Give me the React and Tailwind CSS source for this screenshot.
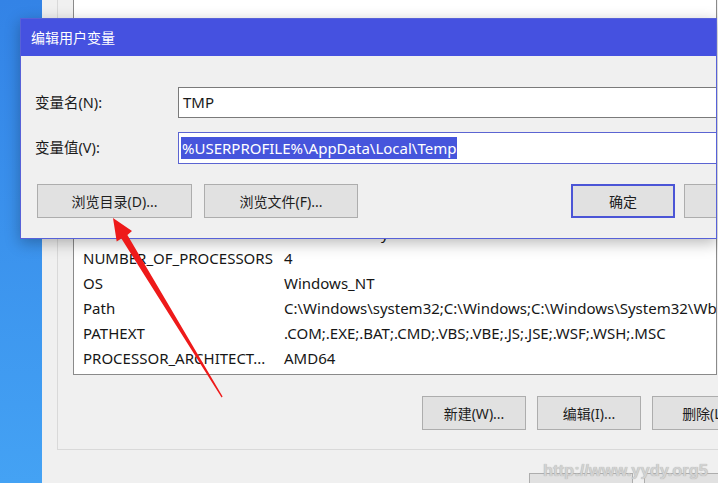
import React from 'react'

const font = "font-['Noto_Sans','Noto_Sans_CJK_SC',sans-serif]"

const rows = [
  ['DriverData', 'C:\\Windows\\System32\\Drivers\\DriverData'],
  ['NUMBER_OF_PROCESSORS', '4'],
  ['OS', 'Windows_NT'],
  ['Path', 'C:\\Windows\\system32;C:\\Windows;C:\\Windows\\System32\\Wbem;C:\\Windows\\System32'],
  ['PATHEXT', '.COM;.EXE;.BAT;.CMD;.VBS;.VBE;.JS;.JSE;.WSF;.WSH;.MSC'],
  ['PROCESSOR_ARCHITECT...', 'AMD64'],
]

function WinButton({ children, className = '', border = 'border border-[#adadad]' }) {
  return (
    <div className={`shrink-0 h-[34px] flex items-center justify-center bg-[#e1e1e1] text-[14px] text-[#1e1e1e] ${border} ${className}`}>
      {children}
    </div>
  )
}

export default function App() {
  return (
    <div className={`relative w-[718px] h-[483px] overflow-hidden bg-gradient-to-b from-[#3383e6] to-[#44a2f4] ${font}`}>
      {/* background window: environment variables */}
      <div className="absolute left-[42px] top-0 right-0 bottom-0 bg-[#f0f0f0] overflow-hidden">
        <div className="mt-[-20px] ml-[15px] w-[720px] pt-[10px] pl-[15px] pb-[19px] border-l border-b border-[#d9d9d9]">
          <div className="w-[644px] h-[385px] flex flex-col justify-end pb-[3px] bg-white border border-[#8a8a8a] overflow-hidden">
            {rows.map(([name, value]) => (
              <div key={name} className="flex h-[25px] items-center pl-[9px] text-[15px] text-[#161616] whitespace-nowrap">
                <div className="w-[201px] shrink-0">{name}</div>
                <div>{value}</div>
              </div>
            ))}
          </div>
          <div className="flex gap-[11px] ml-[349px] mt-[21px]">
            <WinButton className="w-[104px]">新建(W)...</WinButton>
            <WinButton className="w-[104px]">编辑(I)...</WinButton>
            <WinButton className="w-[104px]">删除(L)</WinButton>
          </div>
        </div>
        <div className="flex gap-[11px] ml-[487px] mt-[23px]">
          <WinButton className="w-[104px]">确定</WinButton>
          <WinButton className="w-[104px]">取消</WinButton>
        </div>
      </div>

      {/* watermark */}
      <div className="absolute left-[543px] top-[458px] font-['Liberation_Sans',sans-serif] font-bold text-[16.5px] text-[#d2d2d2] [text-shadow:0_0_1px_#a0a0a0]">
        http://www.yydy.org5
      </div>

      {/* edit dialog */}
      <div className="absolute left-[20px] top-[18px] w-[697px] h-[221px] flex flex-col bg-[#f0f0f0] border border-[#5761d8] shadow-[0_4px_14px_rgba(0,0,0,0.28)] overflow-hidden">
        <div className="h-[37px] shrink-0 bg-[#4551e0] flex items-center pl-[10px] text-[14px] text-white">
          编辑用户变量
        </div>
        <div className="flex flex-col pt-[31px] text-[14.5px] text-[#1a1a1a]">
          <div className="flex items-center pl-[14px]">
            <div className="w-[143px] shrink-0">变量名(N):</div>
            <div className="flex-1 mr-[-10px] h-[31px] bg-white border border-[#7a7a7a] flex items-center pl-[4px] text-[15px]">TMP</div>
          </div>
          <div className="flex items-center pl-[14px] mt-[14px]">
            <div className="w-[143px] shrink-0">变量值(V):</div>
            <div className="flex-1 mr-[-10px] h-[32px] bg-white border border-[#5b64d2] flex items-center pl-[2px] text-[15px]">
              <span className="bg-[#4655dc] text-white px-[1px] leading-[22px]">%USERPROFILE%\AppData\Local\Temp</span>
            </div>
          </div>
          <div className="flex pl-[16px] mt-[20px]">
            <WinButton className="w-[155px]">浏览目录(D)...</WinButton>
            <WinButton className="w-[154px] ml-[12px]">浏览文件(F)...</WinButton>
            <WinButton className="w-[104px] ml-[213px]" border="border-2 border-[#4b55d6]">确定</WinButton>
            <WinButton className="w-[104px] ml-[9px]">取消</WinButton>
          </div>
        </div>
      </div>

      {/* red arrow */}
      <svg className="absolute inset-0 pointer-events-none" width="718" height="483" viewBox="0 0 718 483">
        <polygon
          points="113,218 132,231 127.4,235 222.6,396.6 221.6,397.6 121.4,238.6 116.7,241.5"
          fill="#ee1a1a"
        />
      </svg>
    </div>
  )
}
